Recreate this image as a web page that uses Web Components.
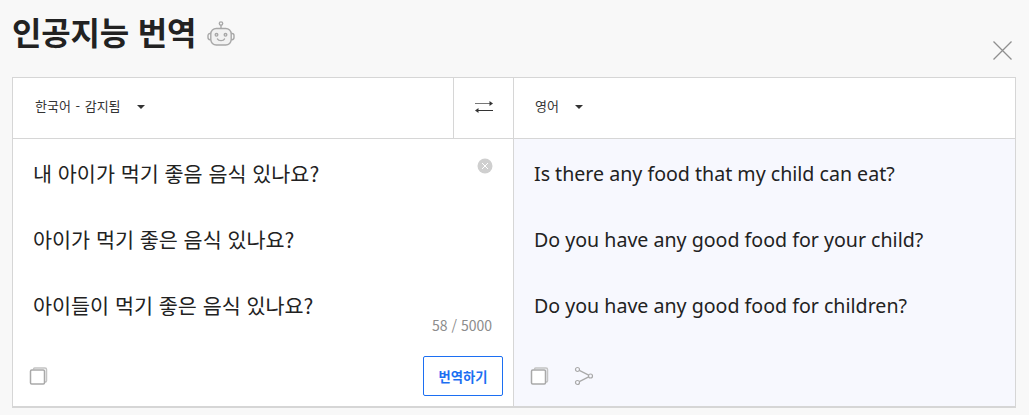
<!DOCTYPE html>
<html lang="ko">
<head>
<meta charset="utf-8">
<title>인공지능 번역</title>
<style>
  html, body { margin: 0; height: 100%; }
  body { background: #f8f8f8; font-family: "Noto Sans CJK KR", sans-serif; color: #222; overflow: hidden; }
</style>
</head>
<body>
<translate-dialog>
  <lang-picker slot="source-lang">한국어 - 감지됨</lang-picker>
  <swap-button slot="swap"></swap-button>
  <lang-picker slot="target-lang">영어</lang-picker>
  <translate-source slot="source"></translate-source>
  <translate-result slot="result"></translate-result>
</translate-dialog>

<script>
const COPY_ICON = `
  <svg width="20" height="20" viewBox="0 0 20 20" fill="none">
    <path d="M4.500 3.600V3.200C4.500 2.500 5 2 5.700 2H16C17 2 17.500 2.500 17.500 3.500V14.800C17.500 15.500 17 16 16.300 16H15.800" stroke="#c4c4c4" stroke-width="1.500"/>
    <rect x="1.500" y="4" width="14" height="14" rx="1.200" fill="#fff" stroke="#a9a9a9" stroke-width="1.500"/>
  </svg>`;

class TranslateDialog extends HTMLElement {
  constructor() {
    super();
    this.attachShadow({ mode: 'open' });
  }

  connectedCallback() {
    this.shadowRoot.innerHTML = `
      <style>
        :host { display: block; padding: 0 13px 0 12px; }
        header { height: 77px; display: flex; justify-content: space-between; }
        .title { display: flex; align-items: flex-start; gap: 11px; }
        h1 { margin: 0; font-size: 32px; line-height: 44px; padding-top: 9px; font-weight: 700; color: #222; letter-spacing: -0.2px; }
        .bot { margin-top: 20px; }
        .close { margin: 41px 4px 0 0; }
        .panel { height: 328px; background: #fff; border: 1px solid #d6d6d6; border-bottom-width: 2px; display: grid; grid-template-columns: 440px 61px 1fr; grid-template-rows: 61px 1fr; }
        .cell { border-bottom: 1px solid #d6d6d6; display: flex; align-items: center; }
        .swap { border-left: 1px solid #d6d6d6; border-right: 1px solid #d6d6d6; justify-content: center; }
        .body-left { grid-column: 1 / 3; border-right: 1px solid #d6d6d6; min-width: 0; }
        .body-right { background: #f7f8fe; min-width: 0; }
        .src-lang { padding-left: 22px; }
        .tgt-lang { padding-left: 21px; }
      </style>
      <header>
        <div class="title">
          <h1>인공지능 번역</h1>
          <svg class="bot" width="28" height="28" viewBox="0 0 28 28" fill="none" stroke="#a8a8a8" stroke-width="1.400">
            <circle cx="14" cy="3.600" r="1.700"/>
            <path d="M14 5.300V8.500"/>
            <rect x="3.800" y="8.500" width="20.400" height="16.500" rx="5.500" fill="#f2f2f2"/>
            <path d="M3.800 13.500H3C1.700 13.500 1 14.400 1 15.600V17.600C1 18.800 1.700 19.700 3 19.700H3.800M24.200 13.500H25C26.300 13.500 27 14.400 27 15.600V17.600C27 18.800 26.300 19.700 25 19.700H24.200"/>
            <circle cx="9.500" cy="14.800" r="1.300"/>
            <circle cx="18.500" cy="14.800" r="1.300"/>
            <path d="M10.500 19C11.500 21.200 16.500 21.200 17.500 19" stroke-linecap="round"/>
          </svg>
        </div>
        <svg class="close" width="19" height="19" viewBox="0 0 19 19" stroke="#8f8f8f" stroke-width="1.300" fill="none">
          <path d="M.5.500L18.500 18.500M18.500.500L.5 18.500"/>
        </svg>
      </header>
      <section class="panel">
        <div class="cell src-lang"><slot name="source-lang"></slot></div>
        <div class="cell swap"><slot name="swap"></slot></div>
        <div class="cell tgt-lang"><slot name="target-lang"></slot></div>
        <div class="body-left"><slot name="source"></slot></div>
        <div class="body-right"><slot name="result"></slot></div>
      </section>
    `;
  }
}

class LangPicker extends HTMLElement {
  constructor() {
    super();
    this.attachShadow({ mode: 'open' });
    this.shadowRoot.innerHTML = `
      <style>
        :host { display: inline-flex; align-items: center; gap: 16px; font-size: 13px; word-spacing: 1px; color: #333; margin-top: -5px; }
        i { width: 0; height: 0; border-left: 4px solid transparent; border-right: 4px solid transparent; border-top: 4px solid #333; margin-top: 2px; }
      </style>
      <slot></slot><i></i>
    `;
  }
}

class SwapButton extends HTMLElement {
  constructor() {
    super();
    this.attachShadow({ mode: 'open' });
    this.shadowRoot.innerHTML = `
      <style>:host { display: block; line-height: 0; margin-top: -3px; }</style>
      <svg width="18" height="14" viewBox="0 0 18 14" fill="none">
        <path d="M0 3.500H15.500" stroke="#777" stroke-width="1"/>
        <path d="M18 3.500L14.500 1V6Z" fill="#333"/>
        <path d="M2.500 10.500H18" stroke="#333" stroke-width="1"/>
        <path d="M0 10.500L3.500 8V13Z" fill="#333"/>
      </svg>
    `;
  }
}

const PANE_STYLE = `
  :host { display: flex; flex-direction: column; height: 100%; position: relative; box-sizing: border-box; }
  .lines { margin: 0; padding-top: 18px; padding-left: 20px; line-height: 33px; color: #222; }
  .lines div { margin-bottom: 33px; white-space: nowrap; }
  .foot { margin-top: auto; display: flex; align-items: center; }
`;

class TranslateSource extends HTMLElement {
  constructor() {
    super();
    this.attachShadow({ mode: 'open' });
    this.shadowRoot.innerHTML = `
      <style>
        ${PANE_STYLE}
        .lines { font-size: 20.700px; }
        .clear { position: absolute; top: 19px; right: 20px; }
        .count { position: absolute; top: 177px; right: 21px; font-size: 14px; line-height: 18px; color: #8c8c8c; }
        .foot { padding: 0 10px 10px 16px; justify-content: space-between; }
        button { width: 80px; height: 40px; padding: 0; border: 1px solid #1c6ff2; border-radius: 2px; background: #fff; color: #1c6ff2; font: 700 13.300px "Noto Sans CJK KR", sans-serif; }
      </style>
      <div class="lines">
        <div>내 아이가 먹기 좋음 음식 있나요?</div>
        <div>아이가 먹기 좋은 음식 있나요?</div>
        <div>아이들이 먹기 좋은 음식 있나요?</div>
      </div>
      <svg class="clear" width="16" height="16" viewBox="0 0 16 16">
        <circle cx="8" cy="8" r="7.500" fill="#cfcfcf"/>
        <path d="M5 5L11 11M11 5L5 11" stroke="#fff" stroke-width="1"/>
      </svg>
      <span class="count">58 / 5000</span>
      <div class="foot">
        ${COPY_ICON}
        <button type="button">번역하기</button>
      </div>
    `;
  }
}

class TranslateResult extends HTMLElement {
  constructor() {
    super();
    this.attachShadow({ mode: 'open' });
    this.shadowRoot.innerHTML = `
      <style>
        ${PANE_STYLE}
        .lines { font-family: "Noto Sans", sans-serif; font-size: 19.600px; }
        .foot { padding: 0 0 20px 16px; gap: 24px; }
      </style>
      <div class="lines">
        <div>Is there any food that my child can eat?</div>
        <div>Do you have any good food for your child?</div>
        <div>Do you have any good food for children?</div>
      </div>
      <div class="foot">
        ${COPY_ICON}
        <svg width="20" height="20" viewBox="0 0 20 20" fill="none" stroke="#a9a9a9" stroke-width="1.200">
          <circle cx="3.500" cy="3.500" r="2"/>
          <circle cx="3.500" cy="16.500" r="2"/>
          <circle cx="16.500" cy="10" r="2"/>
          <path d="M5.300 4.400L14.700 9.100M14.700 10.900L5.300 15.600"/>
        </svg>
      </div>
    `;
  }
}

customElements.define('translate-dialog', TranslateDialog);
customElements.define('lang-picker', LangPicker);
customElements.define('swap-button', SwapButton);
customElements.define('translate-source', TranslateSource);
customElements.define('translate-result', TranslateResult);
</script>
</body>
</html>
